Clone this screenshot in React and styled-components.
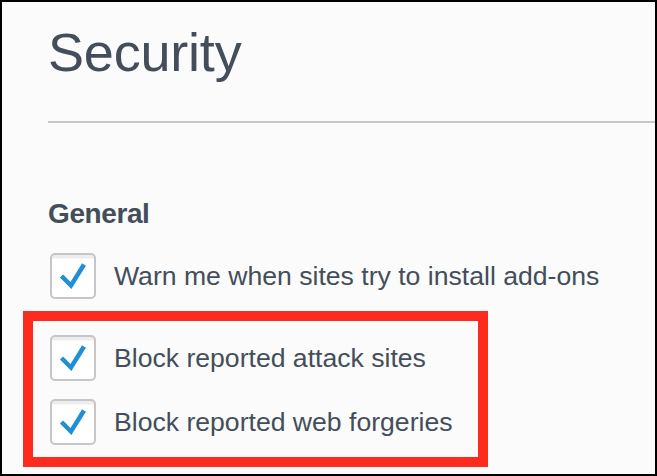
import React from "react";
import styled, { createGlobalStyle } from "styled-components";

const GlobalStyle = createGlobalStyle`
  html, body {
    margin: 0;
    padding: 0;
    background: #fbfbfb;
  }
  * {
    box-sizing: border-box;
  }
`;

const options = [
  { label: "Warn me when sites try to install add-ons", highlighted: false },
  { label: "Block reported attack sites", highlighted: true },
  { label: "Block reported web forgeries", highlighted: true },
];

const CheckIcon = () => (
  <svg width="46" height="46" viewBox="0 0 46 46">
    <polyline
      points="11.5,23 21,32.5 34,11.5"
      fill="none"
      stroke="#1f8fd6"
      strokeWidth="4.5"
      strokeLinejoin="miter"
    />
  </svg>
);

const Option = ({ label }) => (
  <Row>
    <Checkbox>
      <CheckIcon />
    </Checkbox>
    <Label>{label}</Label>
  </Row>
);

const App = () => {
  const plain = options.filter((o) => !o.highlighted);
  const marked = options.filter((o) => o.highlighted);

  return (
    <>
      <GlobalStyle />
      <Frame>
        <Content>
          <Title>Security</Title>
          <Divider />
          <SectionTitle>General</SectionTitle>
          {plain.map((o) => (
            <Option key={o.label} label={o.label} />
          ))}
          <Highlight>
            {marked.map((o) => (
              <Option key={o.label} label={o.label} />
            ))}
          </Highlight>
        </Content>
      </Frame>
    </>
  );
};

const Frame = styled.div`
  width: 657px;
  height: 476px;
  border: 2px solid #000;
  background: #fbfbfb;
  overflow: hidden;
  font-family: "Liberation Sans", Arial, sans-serif;
  color: #434e5a;
`;

const Content = styled.div`
  padding: 18px 0 0 46px;
  display: flex;
  flex-direction: column;
  align-items: flex-start;
`;

const Title = styled.h1`
  margin: 0;
  font-size: 54px;
  line-height: 64px;
  font-weight: 400;
  letter-spacing: -0.2px;
`;

const Divider = styled.div`
  align-self: stretch;
  height: 2px;
  background: #c8c8c8;
  margin-top: 37px;
`;

const SectionTitle = styled.h2`
  margin: 74px 0 0 0;
  font-size: 28px;
  line-height: 34px;
  font-weight: 700;
  letter-spacing: -0.4px;
`;

const Row = styled.div`
  display: flex;
  align-items: center;
  height: 46px;
  gap: 18px;
  margin-top: 22px;

  & + & {
    margin-top: 18px;
  }
`;

const Checkbox = styled.div`
  width: 46px;
  height: 46px;
  margin-left: 2px;
  flex-shrink: 0;
  border: 2px solid #c6c6c6;
  border-radius: 5px;
  background: linear-gradient(#ededed 0, #ededed 3px, #ffffff 4px);
  display: flex;
  align-items: center;
  justify-content: center;

  svg {
    margin: -2px;
  }
`;

const Label = styled.span`
  font-size: 26.6px;
  line-height: 32px;
  white-space: nowrap;
`;

const Highlight = styled.div`
  margin: 12px 0 0 -25px;
  width: 465px;
  border: 10px solid #fc2b1e;
  padding: 14px 0 12px 15px;

  & > div:first-child {
    margin-top: 0;
  }
`;

export default App;
